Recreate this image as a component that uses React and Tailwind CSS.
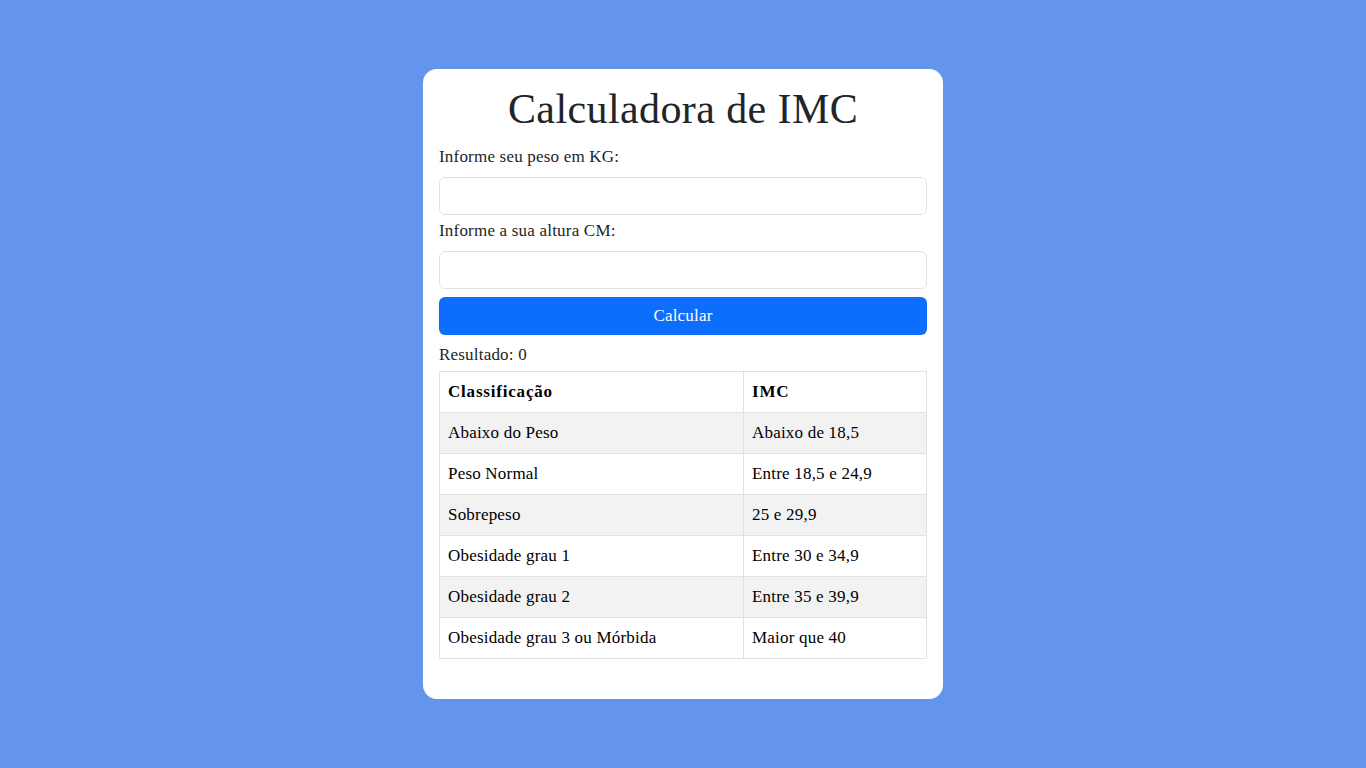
import React, { useState } from "react";

const faixas = [
  { classe: "Abaixo do Peso", imc: "Abaixo de 18,5" },
  { classe: "Peso Normal", imc: "Entre 18,5 e 24,9" },
  { classe: "Sobrepeso", imc: "25 e 29,9" },
  { classe: "Obesidade grau 1", imc: "Entre 30 e 34,9" },
  { classe: "Obesidade grau 2", imc: "Entre 35 e 39,9" },
  { classe: "Obesidade grau 3 ou Mórbida", imc: "Maior que 40" },
];

function App() {
  const [peso, setPeso] = useState("");
  const [altura, setAltura] = useState("");
  const [resultado, setResultado] = useState(0);

  // calcula o imc com altura em cm
  const calcular = () => {
    const p = Number(peso);
    const a = Number(altura) / 100;
    if (!p || !a) return;
    setResultado((p / (a * a)).toFixed(2));
  };

  return (
    <div className="min-h-screen w-full bg-[#6495ed] flex justify-center pt-[69px] font-['Liberation_Serif',serif] text-[#212529]">
      <div className="w-[520px] h-[630px] bg-white rounded-[14px] px-4 pt-4">
        <h1 className="text-[42px] leading-[48px] tracking-[0.4px] text-center mb-3">Calculadora de IMC</h1>

        <label className="block text-[17px] tracking-[0.2px] leading-6 mb-2">Informe seu peso em KG:</label>
        <input
          type="number"
          className="block w-full h-[38px] border border-[#dee2e6] rounded-md px-3 outline-none"
          value={peso}
          onChange={(e) => setPeso(e.target.value)}
        />

        <label className="block text-[17px] tracking-[0.2px] leading-6 mt-1 mb-2">Informe a sua altura CM:</label>
        <input
          type="number"
          className="block w-full h-[38px] border border-[#dee2e6] rounded-md px-3 outline-none"
          value={altura}
          onChange={(e) => setAltura(e.target.value)}
        />

        <button
          type="button"
          onClick={calcular}
          className="block w-full h-[38px] mt-2 bg-[#0d6efd] text-white rounded-md text-[17px] leading-6 tracking-[0.2px] cursor-pointer"
        >
          Calcular
        </button>

        <p className="text-[17px] tracking-[0.2px] leading-6 mt-2 mb-1">Resultado: {resultado}</p>

        <table className="w-full border-collapse text-[17px] leading-6 tracking-[0.2px] text-black">
          <thead>
            <tr>
              <th className="w-[304px] border border-[#dee2e6] px-2 py-0 h-[41px] text-left font-bold tracking-[0.8px]">Classificação</th>
              <th className="border border-[#dee2e6] px-2 py-0 h-[41px] text-left font-bold tracking-[0.8px]">IMC</th>
            </tr>
          </thead>
          <tbody>
            {faixas.map((f, i) => (
              <tr key={f.classe} className={i % 2 === 0 ? "bg-[#f2f2f2]" : "bg-white"}>
                <td className="border border-[#dee2e6] px-2 py-0 h-[41px]">{f.classe}</td>
                <td className="border border-[#dee2e6] px-2 py-0 h-[41px]">{f.imc}</td>
              </tr>
            ))}
          </tbody>
        </table>
      </div>
    </div>
  );
}

export default App;
